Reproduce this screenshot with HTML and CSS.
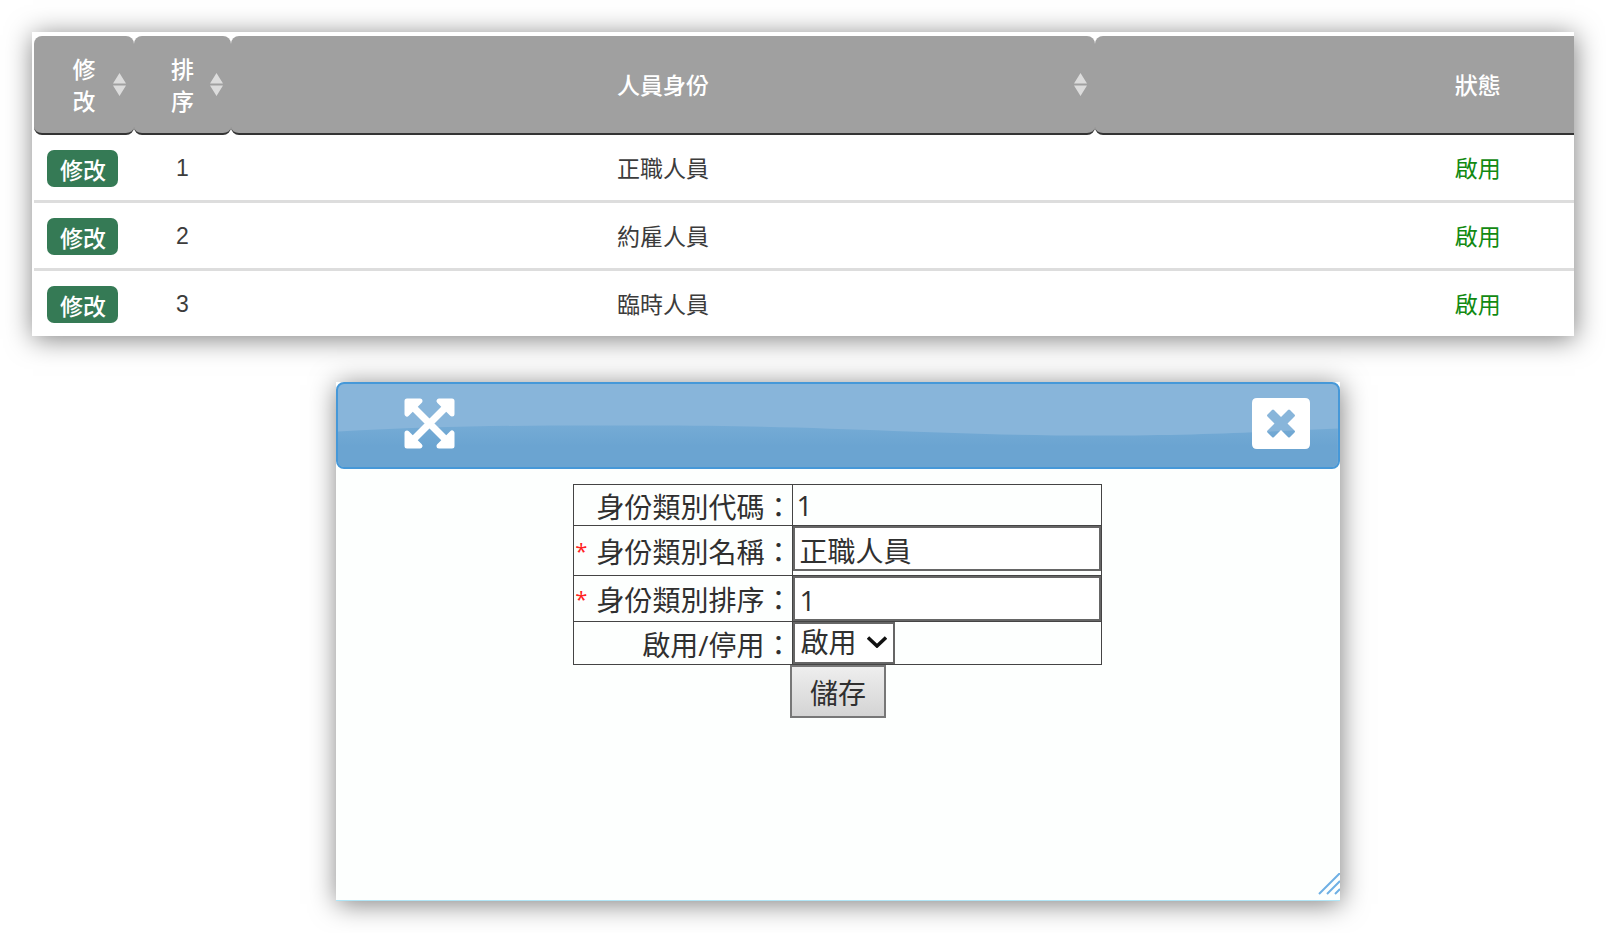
FILE: index.html
```html
<!DOCTYPE html>
<html lang="zh-Hant">
<head>
<meta charset="utf-8">
<title>人員身份</title>
<link rel="stylesheet" href="styles.css">
</head>
<body>
<main class="page">
  <section class="panel list">
    <table class="grid">
      <colgroup><col class="col-edit"><col class="col-order"><col class="col-name"><col></colgroup>
      <thead>
        <tr>
          <th class="narrow" scope="col">修改<svg class="sort" viewBox="0 0 13 23" aria-hidden="true"><path d="M6.500 0 13 10.500H0zM0 12.500h13L6.500 23z"/></svg></th>
          <th class="narrow" scope="col">排序<svg class="sort" viewBox="0 0 13 23" aria-hidden="true"><path d="M6.500 0 13 10.500H0zM0 12.500h13L6.500 23z"/></svg></th>
          <th scope="col">人員身份<svg class="sort sort-wide" viewBox="0 0 13 23" aria-hidden="true"><path d="M6.500 0 13 10.500H0zM0 12.500h13L6.500 23z"/></svg></th>
          <th scope="col">狀態</th>
        </tr>
      </thead>
      <tbody>
        <tr><td class="act"><button class="edit" type="button">修改</button></td><td class="num">1</td><td>正職人員</td><td class="on">啟用</td></tr>
        <tr><td class="act"><button class="edit" type="button">修改</button></td><td class="num">2</td><td>約雇人員</td><td class="on">啟用</td></tr>
        <tr><td class="act"><button class="edit" type="button">修改</button></td><td class="num">3</td><td>臨時人員</td><td class="on">啟用</td></tr>
      </tbody>
    </table>
  </section>

  <section class="panel dialog" role="dialog" aria-label="身份類別">
    <header class="titlebar">
      <svg class="wave" viewBox="0 0 1000 82" preserveAspectRatio="none" aria-hidden="true">
        <defs><linearGradient id="w" x1="0" y1="0" x2="0" y2="1"><stop offset="0" stop-color="#75abd5"/><stop offset=".5" stop-color="#6ba4d1"/><stop offset="1" stop-color="#6ba4d1"/></linearGradient></defs>
        <path fill="url(#w)" d="M0 47C120 40 230 41 310 41 500 41 600 51 760 51 860 51 930 47 1000 44V82H0z"/>
      </svg>
      <button class="tool" type="button" aria-label="放大">
        <svg width="51" height="51" viewBox="0 0 51 51"><path d="M8 8 43 43M43 8 8 43" stroke="#fff" stroke-width="7"/><path fill="#fff" stroke="#fff" stroke-width="5" stroke-linejoin="round" d="M3 3H16L3 16zM48 3V16L35 3zM3 48V35L16 48zM48 48H35L48 35z"/></svg>
      </button>
      <button class="tool" type="button" aria-label="關閉">
        <svg width="58" height="51" viewBox="0 0 58 51"><path fill="#fff" fill-rule="evenodd" d="M5 0H53Q58 0 58 5V46Q58 51 53 51H5Q0 51 0 46V5Q0 0 5 0ZM20 12 15.500 16.500Q14.500 17.500 15.500 18.500L22.500 25.500 15.500 32.500Q14.500 33.500 15.500 34.500L20 39Q21 40 22 39L29 32 36 39Q37 40 38 39L42.500 34.500Q43.500 33.500 42.500 32.500L35.500 25.500 42.500 18.500Q43.500 17.500 42.500 16.500L38 12Q37 11 36 12L29 19 22 12Q21 11 20 12Z"/></svg>
      </button>
    </header>
    <form class="form">
      <table class="fields">
        <tr class="row-code"><th scope="row">身份類別代碼：</th><td class="plain">1</td></tr>
        <tr class="row-name"><th scope="row"><label for="name"><span class="req">*</span>身份類別名稱：</label></th><td><input class="text" id="name" type="text" value="正職人員"></td></tr>
        <tr class="row-order"><th scope="row"><label for="order"><span class="req">*</span>身份類別排序：</label></th><td><input class="text" id="order" type="text" value="1"></td></tr>
        <tr class="row-state"><th scope="row"><label for="state">啟用/停用：</label></th><td><span class="pick"><select id="state"><option>啟用</option><option>停用</option></select><svg class="chev" viewBox="0 0 20 12" aria-hidden="true"><path d="M1 1.500 10 10 19 1.500" fill="none" stroke="#111" stroke-width="3.500"/></svg></span></td></tr>
      </table>
      <button class="save" type="button">儲存</button>
    </form>
    <svg class="grip" viewBox="0 0 22 22" aria-hidden="true"><path d="M1 21 22 0M9 21 22 8M17 21 22 16" stroke="#6fb0e4" stroke-width="2"/></svg>
  </section>
</main>
</body>
</html>
```
FILE: styles.css
```css
* { box-sizing: border-box; }

body {
  margin: 0;
  background: #fff;
  color: #3c3c3c;
  font-family: "Liberation Sans", "Noto Sans CJK TC", sans-serif;
  font-size: 23px;
  line-height: 32px;
}

button, input, select { font: inherit; color: inherit; }

.page { padding: 32px; }

.panel {
  background: #fff;
  box-shadow: 1px 3px 25px rgba(0, 0, 0, .5);
}

/* List of identities */
.list {
  overflow: hidden;
  height: 304px;
  padding: 4px 0 0 2px;
}

.grid {
  width: 118.6%;
  table-layout: fixed;
  border-spacing: 0;
}

.col-edit { width: 100px; }
.col-order { width: 97px; }
.col-name { width: 47.3%; }

.grid th {
  position: relative;
  height: 99px;
  padding: 3px 0 0;
  background: #a0a0a0;
  border-bottom: 2px solid #333;
  border-radius: 8px;
  color: #fff;
  font-weight: 500;
}

.grid .narrow { padding: 2px 32px 0; }

.sort {
  position: absolute;
  top: 37px;
  right: 8px;
  width: 13px;
  height: 23px;
  fill: #dcdcdc;
}

.grid td {
  height: 68px;
  padding: 3px 0 0;
  border-bottom: 3px solid #ddd;
  text-align: center;
}

.grid .num { padding-top: 1px; }
.grid .act { padding: 1px 3px 0 0; }
.grid .on { color: #128a12; }

.edit {
  display: inline-block;
  height: 37px;
  padding: 5px 12px 0 13px;
  border: 0;
  border-radius: 7px;
  background: #357a55;
  color: #fff;
  font-weight: 500;
  vertical-align: middle;
}

/* Edit dialog */
.dialog {
  position: relative;
  width: 65.1%;
  min-height: 519px;
  margin: 46px 0 0 304px;
  background: #fdfffe;
  border-bottom: 1px solid #b0e6f7;
  color: #303030;
  font-family: "Open Sans", "Noto Sans CJK TC", sans-serif;
  font-size: 28px;
}

.titlebar {
  position: relative;
  display: flex;
  justify-content: space-between;
  padding: 14px 28px 18px 66px;
  overflow: hidden;
  background: #88b5da;
  border: 2px solid #4698d8;
  border-radius: 8px;
}

.wave {
  position: absolute;
  inset: 0;
  width: 100%;
  height: 100%;
}

.tool {
  position: relative;
  padding: 0;
  border: 0;
  background: none;
}

.tool svg { display: block; }

.form {
  display: flex;
  flex-direction: column;
  align-items: center;
  padding-top: 15px;
}

.fields {
  width: 529px;
  border-collapse: collapse;
  table-layout: fixed;
}

.fields th, .fields td {
  padding: 0;
  border: 1px solid #444;
}

.fields th {
  width: 219px;
  padding-top: 3px;
  font-weight: 400;
  text-align: right;
  white-space: nowrap;
}

.fields td { vertical-align: top; }
.fields .plain { padding-left: 3px; vertical-align: middle; }

.row-code { height: 41px; }
.row-name { height: 50px; }
.row-order { height: 46px; }
.row-state { height: 43px; }

.req {
  margin-right: 9px;
  color: #f22;
  font-size: 22px;
  line-height: 22px;
  vertical-align: 4px;
}

.text {
  display: block;
  width: 100%;
  height: 45px;
  padding: 2px 4px 0;
  border: 2px solid #666;
  background: #fff;
}

.pick {
  position: relative;
  display: block;
  width: 102px;
}

.pick select {
  display: block;
  width: 100%;
  height: 42px;
  padding: 0 0 2px 5px;
  border: 2px solid #666;
  border-radius: 0;
  background: #fff;
  appearance: none;
}

.chev {
  position: absolute;
  top: 14px;
  right: 8px;
  width: 20px;
  height: 12px;
}

.save {
  height: 53px;
  padding: 3px 18px 0;
  border: 2px solid #777;
  background: linear-gradient(#eee, #d4d4d4);
}

.grip {
  position: absolute;
  right: 0;
  bottom: 5px;
  width: 22px;
  height: 22px;
}
```
